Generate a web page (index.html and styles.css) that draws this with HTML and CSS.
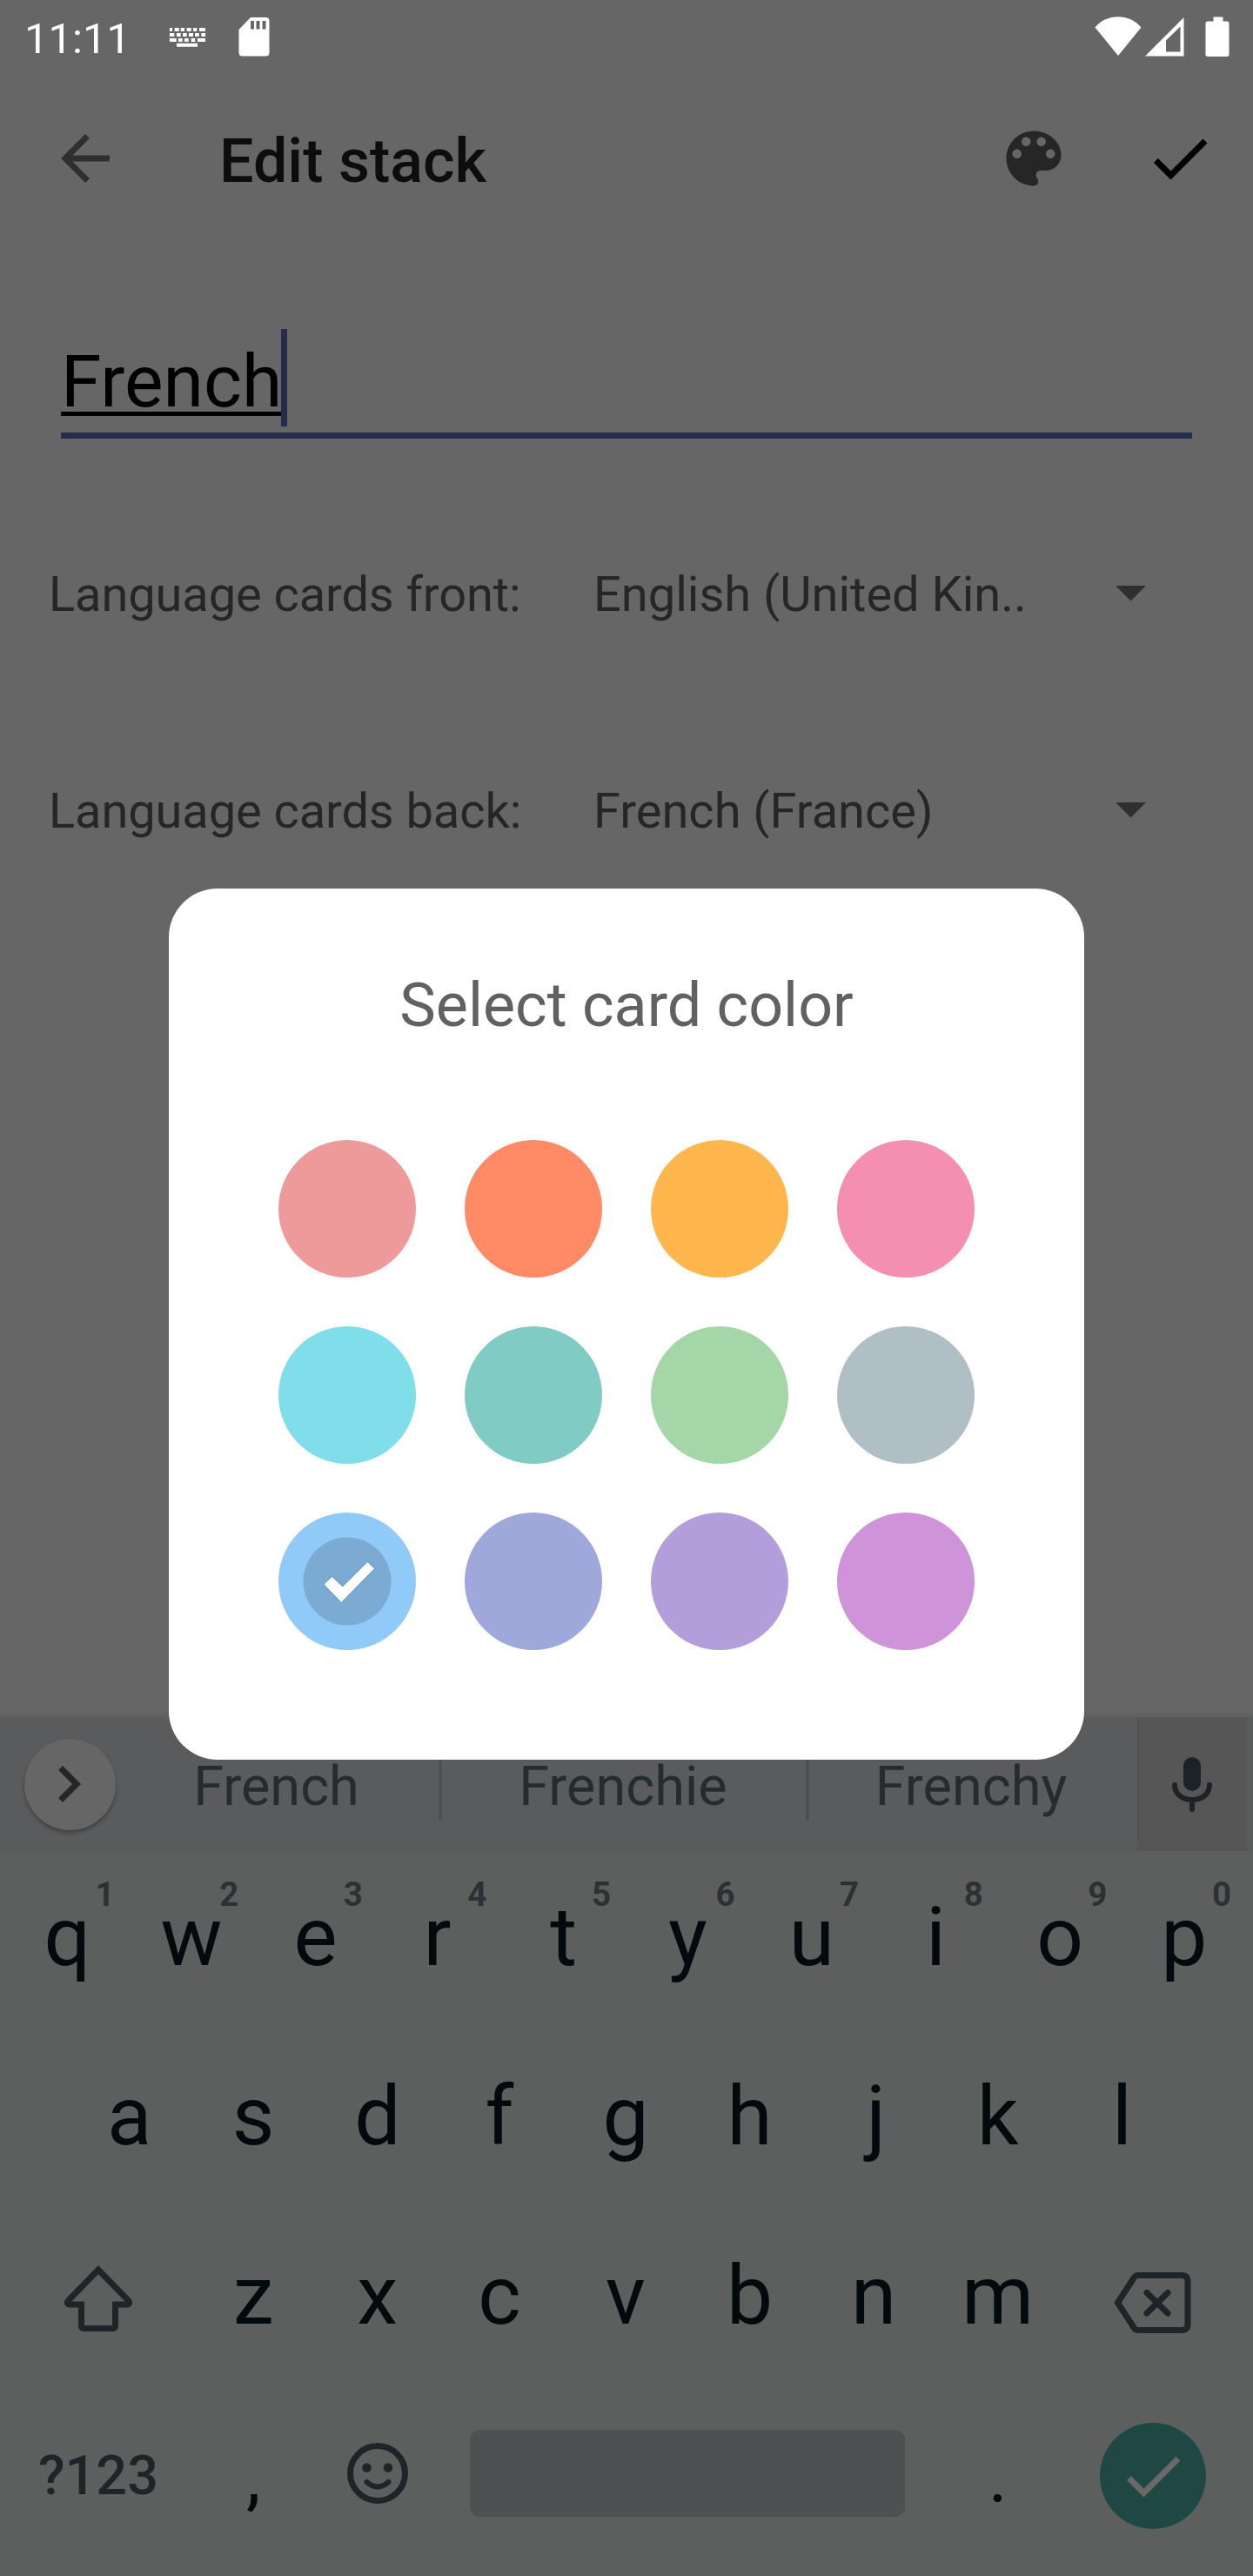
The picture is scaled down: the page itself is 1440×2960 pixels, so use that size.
FILE: index.html
```html
<!DOCTYPE html>
<html lang="en">
<head>
<meta charset="utf-8">
<title>Edit stack</title>
<link rel="stylesheet" href="styles.css">
</head>
<body>
<div class="screen">
  <header class="status-bar">
    <span class="clock">11:11</span>
    <svg class="status-keyboard" width="42" height="24" viewBox="0 0 42 24" fill="#fff"><path d="M1 0h3v4H1zM6.700 0h5v4h-5zM13.700 0H18v4h-4.300zM20.700 0h5v4h-5zM28 0h4.300v4H28zM35 0h7v4h-7zM1 6h5.300v4H1zM9 6h4.700v4H9zM16 6h4.700v4H16zM23 6h5v4h-5zM30 6h4.700v4H30zM37.300 6H42v4h-4.700zM1 12h7.700v4H1zM11 12h4.700v4H11zM18 12h4.700v4H18zM25.700 12h4.600v4h-4.600zM33 12h9v4h-9zM9 17.800h24v4H9z"/></svg>
    <svg class="status-sd" width="36" height="46" viewBox="0 0 36 46"><path fill="#fff" d="M14 1h17.500a4 4 0 0 1 4 4v36.500a4 4 0 0 1-4 4h-27a4 4 0 0 1-4-4V15z"/><path fill="#666" d="M14 5h4v9.500h-4zM20.500 5h4v9.500h-4zM27.500 5h4v9.500h-4z"/></svg>
    <span class="status-gap"></span>
    <svg width="160" height="48" viewBox="0 0 160 48" fill="#fff"><path d="M3.500 13.500C17-3 43-3 56.500 13.500L30 46z"/><path fill-rule="evenodd" d="M61 46.500 105.500 2v44.500zM85 28.500v13h16.500V12.500z"/><path d="M139.500 1.500h11v5h4.500a2.500 2.500 0 0 1 2.500 2.500v35.500a2.500 2.500 0 0 1-2.500 2.500h-22a2.500 2.500 0 0 1-2.500-2.500V9a2.500 2.500 0 0 1 2.500-2.500h6.500z"/></svg>
  </header>

  <div class="app-bar">
    <svg class="icon" viewBox="0 0 24 24" fill="#2f2f2f"><path d="M20 11H7.830l5.590-5.590L12 4l-8 8 8 8 1.410-1.410L7.830 13H20v-2z"/></svg>
    <h1 class="app-title">Edit stack</h1>
    <svg class="icon" viewBox="0 0 24 24" fill="#262626"><path d="M12 3c-4.970 0-9 4.030-9 9s4.030 9 9 9c.83 0 1.500-.67 1.500-1.500 0-.39-.15-.74-.39-1.010-.23-.26-.38-.61-.38-.99 0-.83.67-1.500 1.500-1.500H16c2.760 0 5-2.240 5-5 0-4.420-4.030-8-9-8zm-5.500 9c-.83 0-1.500-.67-1.500-1.500S5.670 9 6.500 9 8 9.670 8 10.500 7.330 12 6.500 12zm3-4C8.670 8 8 7.330 8 6.500S8.670 5 9.500 5s1.500.67 1.500 1.500S10.330 8 9.500 8zm5 0c-.83 0-1.500-.67-1.500-1.500S13.670 5 14.500 5s1.500.67 1.500 1.500S15.330 8 14.500 8zm3 4c-.83 0-1.500-.67-1.500-1.500S16.670 9 17.500 9s1.500.67 1.500 1.500-.67 1.500-1.500 1.500z"/></svg>
    <svg class="icon icon-done" viewBox="0 0 24 24" fill="#000"><path d="M9 16.170 4.830 12l-1.420 1.410L9 19 21 7l-1.410-1.410z"/></svg>
  </div>

  <main class="form">
    <div class="name-field"><span class="name-text">French</span><span class="caret"></span></div>
    <div class="lang-row">
      <span class="lang-label">Language cards front:</span>
      <span class="lang-value">English (United Kin..</span>
      <svg class="arrow" width="35" height="18" viewBox="0 0 35 18"><path fill="#2f2f2f" d="M0 0h35L17.500 17.500z"/></svg>
    </div>
    <div class="lang-row">
      <span class="lang-label">Language cards back:</span>
      <span class="lang-value">French (France)</span>
      <svg class="arrow" width="35" height="18" viewBox="0 0 35 18"><path fill="#2f2f2f" d="M0 0h35L17.500 17.500z"/></svg>
    </div>
  </main>

  <section class="keyboard">
    <div class="strip">
      <div class="expand"><svg class="icon" viewBox="0 0 24 24" fill="#262626"><path d="M10 6 8.590 7.410 13.170 12l-4.580 4.590L10 18l6-6z"/></svg></div>
      <div class="suggestions">
        <span class="suggestion">French</span>
        <span class="divider"></span>
        <span class="suggestion">Frenchie</span>
        <span class="divider"></span>
        <span class="suggestion last">Frenchy</span>
      </div>
      <div class="mic"><svg width="46" height="63" viewBox="0 0 46 63"><rect x="13" y="0" width="20" height="39" rx="10" fill="#1c2326"/><path d="M3 32c0 11 9 17 20 17s20-6 20-17M23 49v11" fill="none" stroke="#1c2326" stroke-width="6" stroke-linecap="round"/></svg></div>
    </div>
    <div class="keys">
      <div class="row">
        <span class="key">q<i class="hint">1</i></span><span class="key">w<i class="hint">2</i></span><span class="key">e<i class="hint">3</i></span><span class="key pull">r<i class="hint">4</i></span><span class="key">t<i class="hint">5</i></span><span class="key">y<i class="hint">6</i></span><span class="key">u<i class="hint">7</i></span><span class="key">i<i class="hint">8</i></span><span class="key">o<i class="hint">9</i></span><span class="key">p<i class="hint">0</i></span>
      </div>
      <div class="row">
        <span class="key">a</span><span class="key">s</span><span class="key">d</span><span class="key pull">f</span><span class="key">g</span><span class="key">h</span><span class="key push">j</span><span class="key">k</span><span class="key">l</span>
      </div>
      <div class="row">
        <span class="key wide"><svg class="shift" width="80" height="78" viewBox="0 0 80 78"><path d="M40 7 5.500 42.500c-2 2-1 4.500 1.500 4.500h13.500v24.500q0 3 3 3h33q3 0 3-3V47H73c2.500 0 3.500-2.500 1.500-4.500z" fill="none" stroke="#1e2428" stroke-width="7"/></svg></span>
        <span class="key">z</span><span class="key">x</span><span class="key pull">c</span><span class="key">v</span><span class="key">b</span><span class="key">n</span><span class="key">m</span>
        <span class="key wide"><svg class="backspace" width="90" height="70" viewBox="0 0 90 70"><path d="M4.500 35 23 6.500q2-3 5-3h50q7 0 7 7v49q0 7-7 7H28q-3 0-5-3z" fill="none" stroke="#1e2428" stroke-width="7"/><path d="M38 23.500l24 23.500M62 23.500 38 47" stroke="#1e2428" stroke-width="7" stroke-linecap="round"/></svg></span>
      </div>
      <div class="row">
        <span class="key wide symbols">?123</span>
        <span class="key punct">,</span>
        <span class="key"><svg class="smiley" width="70" height="70" viewBox="0 0 70 70"><circle cx="35" cy="35" r="31.500" fill="none" stroke="#1e2428" stroke-width="7"/><circle cx="22.500" cy="28.500" r="5.300" fill="#1e2428"/><circle cx="47" cy="28.500" r="5.300" fill="#1e2428"/><path d="M22.500 45q12.500 11 25 0" fill="none" stroke="#1e2428" stroke-width="6" stroke-linecap="round"/></svg></span>
        <span class="space-cell"><span class="space"></span></span>
        <span class="key punct">.</span>
        <span class="key wide"><span class="enter"><svg class="icon" viewBox="0 0 24 24" fill="#6b6766"><path d="M9 16.170 4.830 12l-1.420 1.410L9 19 21 7l-1.410-1.410z"/></svg></span></span>
      </div>
    </div>
  </section>

  <div class="dialog">
    <h2 class="dialog-title">Select card color</h2>
    <div class="swatches">
      <span class="swatch red"></span><span class="swatch coral"></span><span class="swatch amber"></span><span class="swatch pink"></span>
      <span class="swatch cyan"></span><span class="swatch teal"></span><span class="swatch green"></span><span class="swatch gray"></span>
      <span class="swatch blue"><svg width="102" height="102" viewBox="0 0 102 102"><circle cx="51" cy="51" r="50.500" fill="#7babd3"/><path class="tick" d="M24.500 54.500 33.700 46 45.700 57.500 74.300 29l7.700 7.500L44.300 75z" fill="#fff"/></svg></span><span class="swatch indigo"></span><span class="swatch violet"></span><span class="swatch purple"></span>
    </div>
  </div>
</div>
</body>
</html>
```
FILE: styles.css
```css
* { box-sizing: border-box; }

body {
  margin: 0;
  background: #666;
  font-family: Roboto, "Noto Sans", sans-serif;
}

svg { display: block; flex: none; }

.screen {
  position: relative;
  display: flex;
  flex-direction: column;
  width: 1440px;
  height: 2960px;
  overflow: hidden;
  background: #666;
}

.icon { width: 84px; height: 84px; }

/* Status bar */
.status-bar {
  display: flex;
  align-items: flex-start;
  height: 84px;
  padding: 18px 25px 0 28px;
  color: #fff;
}
.clock { width: 166px; font-size: 49px; line-height: 53px; }
.status-keyboard { margin-top: 14px; }
.status-sd { margin: 1px 0 0 38px; }
.status-gap { flex: 1; }

/* App bar */
.app-bar {
  display: flex;
  align-items: center;
  height: 196px;
  padding: 0 42px 0 56px;
}
.app-title {
  flex: 1;
  margin: 0;
  padding: 5px 0 0 112px;
  font-size: 70px;
  font-weight: 500;
  line-height: 82px;
  color: #0d0d0d;
}
.icon-done { margin-left: 84px; }

/* Form */
.name-field {
  display: flex;
  height: 126px;
  margin: 98px 70px 54px;
  border-bottom: 7px solid #252b4d;
}
.name-text {
  height: 100px;
  border-bottom: 5px solid #000;
  font-size: 84px;
  line-height: 121px;
  color: #000;
}
.caret { width: 7px; height: 112px; margin-left: -1px; background: #252b4d; }

.lang-row {
  display: flex;
  align-items: center;
  height: 249px;
  padding: 0 123px 0 56px;
  font-size: 56px;
  color: #262626;
}
.lang-label { width: 626px; letter-spacing: -.1px; }
.lang-value { flex: 1; white-space: nowrap; }
.arrow { margin-top: -2px; }

/* Keyboard */
.keyboard {
  height: 987px;
  margin-top: auto;
  background: #5d5f5e;
  box-shadow: 0 0 12px rgba(0, 0, 0, .1);
}
.strip {
  display: flex;
  align-items: center;
  height: 154px;
  padding: 0 7px 0 28px;
  background: #5a5b5d;
}
.expand {
  display: flex;
  align-items: center;
  width: 105px;
  height: 105px;
  padding-left: 9px;
  border-radius: 50%;
  background: #666;
  box-shadow: 0 3px 4px rgba(0, 0, 0, .3);
}
.suggestions {
  display: grid;
  grid-template-columns: 371px 4px 418px 4px 377px;
  align-items: center;
  font-size: 63px;
  color: #252c2c;
}
.suggestion { padding: 5px 2px 0 0; text-align: center; }
.suggestion.last { padding-right: 5px; }
.divider { height: 84px; background: #4e4f51; }
.mic {
  display: flex;
  align-items: center;
  justify-content: center;
  width: 126px;
  height: 154px;
  background: #565656;
}

.keys { padding: 0 8px 0 6px; }
.row {
  display: flex;
  justify-content: center;
  height: 206px;
  padding-bottom: 7px;
}
.key {
  position: relative;
  display: flex;
  align-items: center;
  justify-content: center;
  width: 142.6px;
  font-size: 94.5px;
  line-height: 1;
  color: #020a0e;
}
.key.wide { width: 213.9px; }
.key.pull { padding-right: 5px; }
.key.push { padding-left: 5px; }
.hint {
  position: absolute;
  top: 27px;
  right: 17px;
  font-size: 38.5px;
  font-style: normal;
  font-weight: 700;
  line-height: 45px;
  color: #2c3133;
}
.key.symbols { font-size: 63px; font-weight: 500; color: #1e2428; }
.key.punct { padding-top: 5px; font-size: 84px; }
.shift { margin-top: 3px; }
.backspace { margin-top: 14px; }
.smiley { margin-top: -5px; }
.space-cell { display: flex; align-items: center; justify-content: center; width: 570.4px; }
.space { width: 500px; height: 100px; margin-top: -5px; border-radius: 12px; background: #4f5051; }
.enter {
  display: flex;
  align-items: center;
  justify-content: center;
  width: 122px;
  height: 122px;
  border-radius: 50%;
  background: #1f4844;
}

/* Color picker dialog */
.dialog {
  position: absolute;
  top: 1021px;
  left: 194px;
  width: 1052px;
  height: 1001px;
  padding-top: 93px;
  border-radius: 56px;
  background: #fff;
}
.dialog-title {
  margin: 0 0 114px;
  font-size: 70px;
  font-weight: 400;
  line-height: 82px;
  text-align: center;
  color: #616161;
}
.swatches {
  display: grid;
  grid-template-columns: repeat(4, 158px);
  gap: 56px;
  justify-content: center;
}
.swatch {
  display: flex;
  align-items: center;
  justify-content: center;
  height: 158px;
  border-radius: 50%;
}
.tick { filter: drop-shadow(0 0 1px rgba(0, 0, 0, .25)); }
.red { background: #ef9a9a; }
.coral { background: #ff8a65; }
.amber { background: #ffb74d; }
.pink { background: #f48fb1; }
.cyan { background: #80deea; }
.teal { background: #80cbc4; }
.green { background: #a5d6a7; }
.gray { background: #b0bec5; }
.blue { background: #90caf9; }
.indigo { background: #9fa8da; }
.violet { background: #b39ddb; }
.purple { background: #ce93d8; }
```
